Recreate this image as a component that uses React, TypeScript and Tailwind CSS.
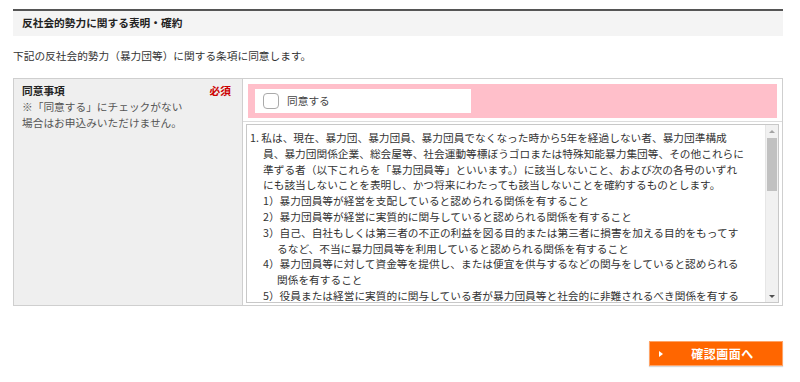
import React from "react";

const font = { fontFamily: '"Noto Sans CJK JP", "Noto Sans", sans-serif' };

type Line = { text: string; indent: number };

const terms: Line[] = [
  { text: "1. 私は、現在、暴力団、暴力団員、暴力団員でなくなった時から5年を経過しない者、暴力団準構成", indent: 0 },
  { text: "員、暴力団関係企業、総会屋等、社会運動等標ぼうゴロまたは特殊知能暴力集団等、その他これらに", indent: 1 },
  { text: "準ずる者（以下これらを「暴力団員等」といいます。）に該当しないこと、および次の各号のいずれ", indent: 1 },
  { text: "にも該当しないことを表明し、かつ将来にわたっても該当しないことを確約するものとします。", indent: 1 },
  { text: "1）暴力団員等が経営を支配していると認められる関係を有すること", indent: 1 },
  { text: "2）暴力団員等が経営に実質的に関与していると認められる関係を有すること", indent: 1 },
  { text: "3）自己、自社もしくは第三者の不正の利益を図る目的または第三者に損害を加える目的をもってす", indent: 1 },
  { text: "るなど、不当に暴力団員等を利用していると認められる関係を有すること", indent: 2 },
  { text: "4）暴力団員等に対して資金等を提供し、または便宜を供与するなどの関与をしていると認められる", indent: 1 },
  { text: "関係を有すること", indent: 2 },
  { text: "5）役員または経営に実質的に関与している者が暴力団員等と社会的に非難されるべき関係を有する", indent: 1 },
];

const indents = ["pl-0", "pl-[13px]", "pl-[27px]"];

export default function App() {
  return (
    <div className="w-[800px] h-[382px] bg-white text-[#333] pt-[9px]" style={font}>
      <div className="ml-[13px] w-[770px]">
        {/* Heading */}
        <div className="border-t-2 border-[#555] bg-[#f4f4f4] h-[27px] flex items-center pl-[9px]">
          <h2 className="text-[10.7px] font-bold text-[#222]">反社会的勢力に関する表明・確約</h2>
        </div>

        <p className="text-[10.7px] leading-[16px] mt-[12px] text-[#333]">
          下記の反社会的勢力（暴力団等）に関する条項に同意します。
        </p>

        {/* Agreement table */}
        <div className="mt-[14px] border border-[#cfcfcf] flex h-[228px]">
          <div className="w-[229px] bg-[#efefef] border-r border-[#cfcfcf] px-[8px] pt-[4px] text-[10.7px] leading-[16px]">
            <div className="flex justify-between">
              <span className="font-bold text-[#222]">同意事項</span>
              <span className="font-bold text-[#cc0000] pr-[3px]">必須</span>
            </div>
            <p className="text-[#555]">※「同意する」にチェックがない</p>
            <p className="text-[#555]">場合はお申込みいただけません。</p>
          </div>

          <div className="flex-1 flex flex-col">
            <div className="px-[5px] pt-[5px] pb-[3px] border-b border-[#dcdcdc]">
              <div className="bg-[#ffbfca] h-[34px] flex items-center pl-[7px]">
                <label className="bg-white w-[216px] h-[24px] flex items-center pl-[8px] gap-[8px]">
                  <span className="w-[16px] h-[16px] rounded-[4px] border border-[#aaa] bg-white" />
                  <span className="text-[10.7px] text-[#444]">同意する</span>
                </label>
              </div>
            </div>

            <div className="mx-[3px] mt-[2px] mb-[2px] flex-1 border border-[#c8c8c8] flex overflow-hidden">
              <div className="flex-1 pl-[3px] pt-[5px] overflow-hidden text-[10.7px] leading-[15.8px] text-[#333] whitespace-nowrap">
                {terms.map((line, i) => (
                  <div key={i} className={indents[line.indent]}>
                    {line.text}
                  </div>
                ))}
              </div>
              {/* scrollbar */}
              <div className="w-[13px] bg-[#f1f1f1] flex flex-col items-center border-l border-[#e6e6e6]">
                <div className="h-[12px] flex items-center justify-center">
                  <span className="w-0 h-0 border-x-[3px] border-x-transparent border-b-[3px] border-b-[#a3a3a3]" />
                </div>
                <div className="flex-1 w-full px-[1px]">
                  <div className="mt-[1px] h-[53px] bg-[#c1c1c1]" />
                </div>
                <div className="h-[12px] flex items-center justify-center">
                  <span className="w-0 h-0 border-x-[3px] border-x-transparent border-t-[3px] border-t-[#505050]" />
                </div>
              </div>
            </div>
          </div>
        </div>

        {/* Button */}
        <div className="flex justify-end mt-[35px]">
          <button className="w-[134px] h-[25px] bg-[#ff6600] border border-[#ffa366] shadow-[0_1px_1px_rgba(0,0,0,0.15)] flex items-center pl-[9px] text-white">
            <span className="w-0 h-0 border-y-[3px] border-y-transparent border-l-[4px] border-l-white" />
            <span className="flex-1 text-center text-[12px] font-bold tracking-[0.5px]">確認画面へ</span>
          </button>
        </div>
      </div>
    </div>
  );
}
